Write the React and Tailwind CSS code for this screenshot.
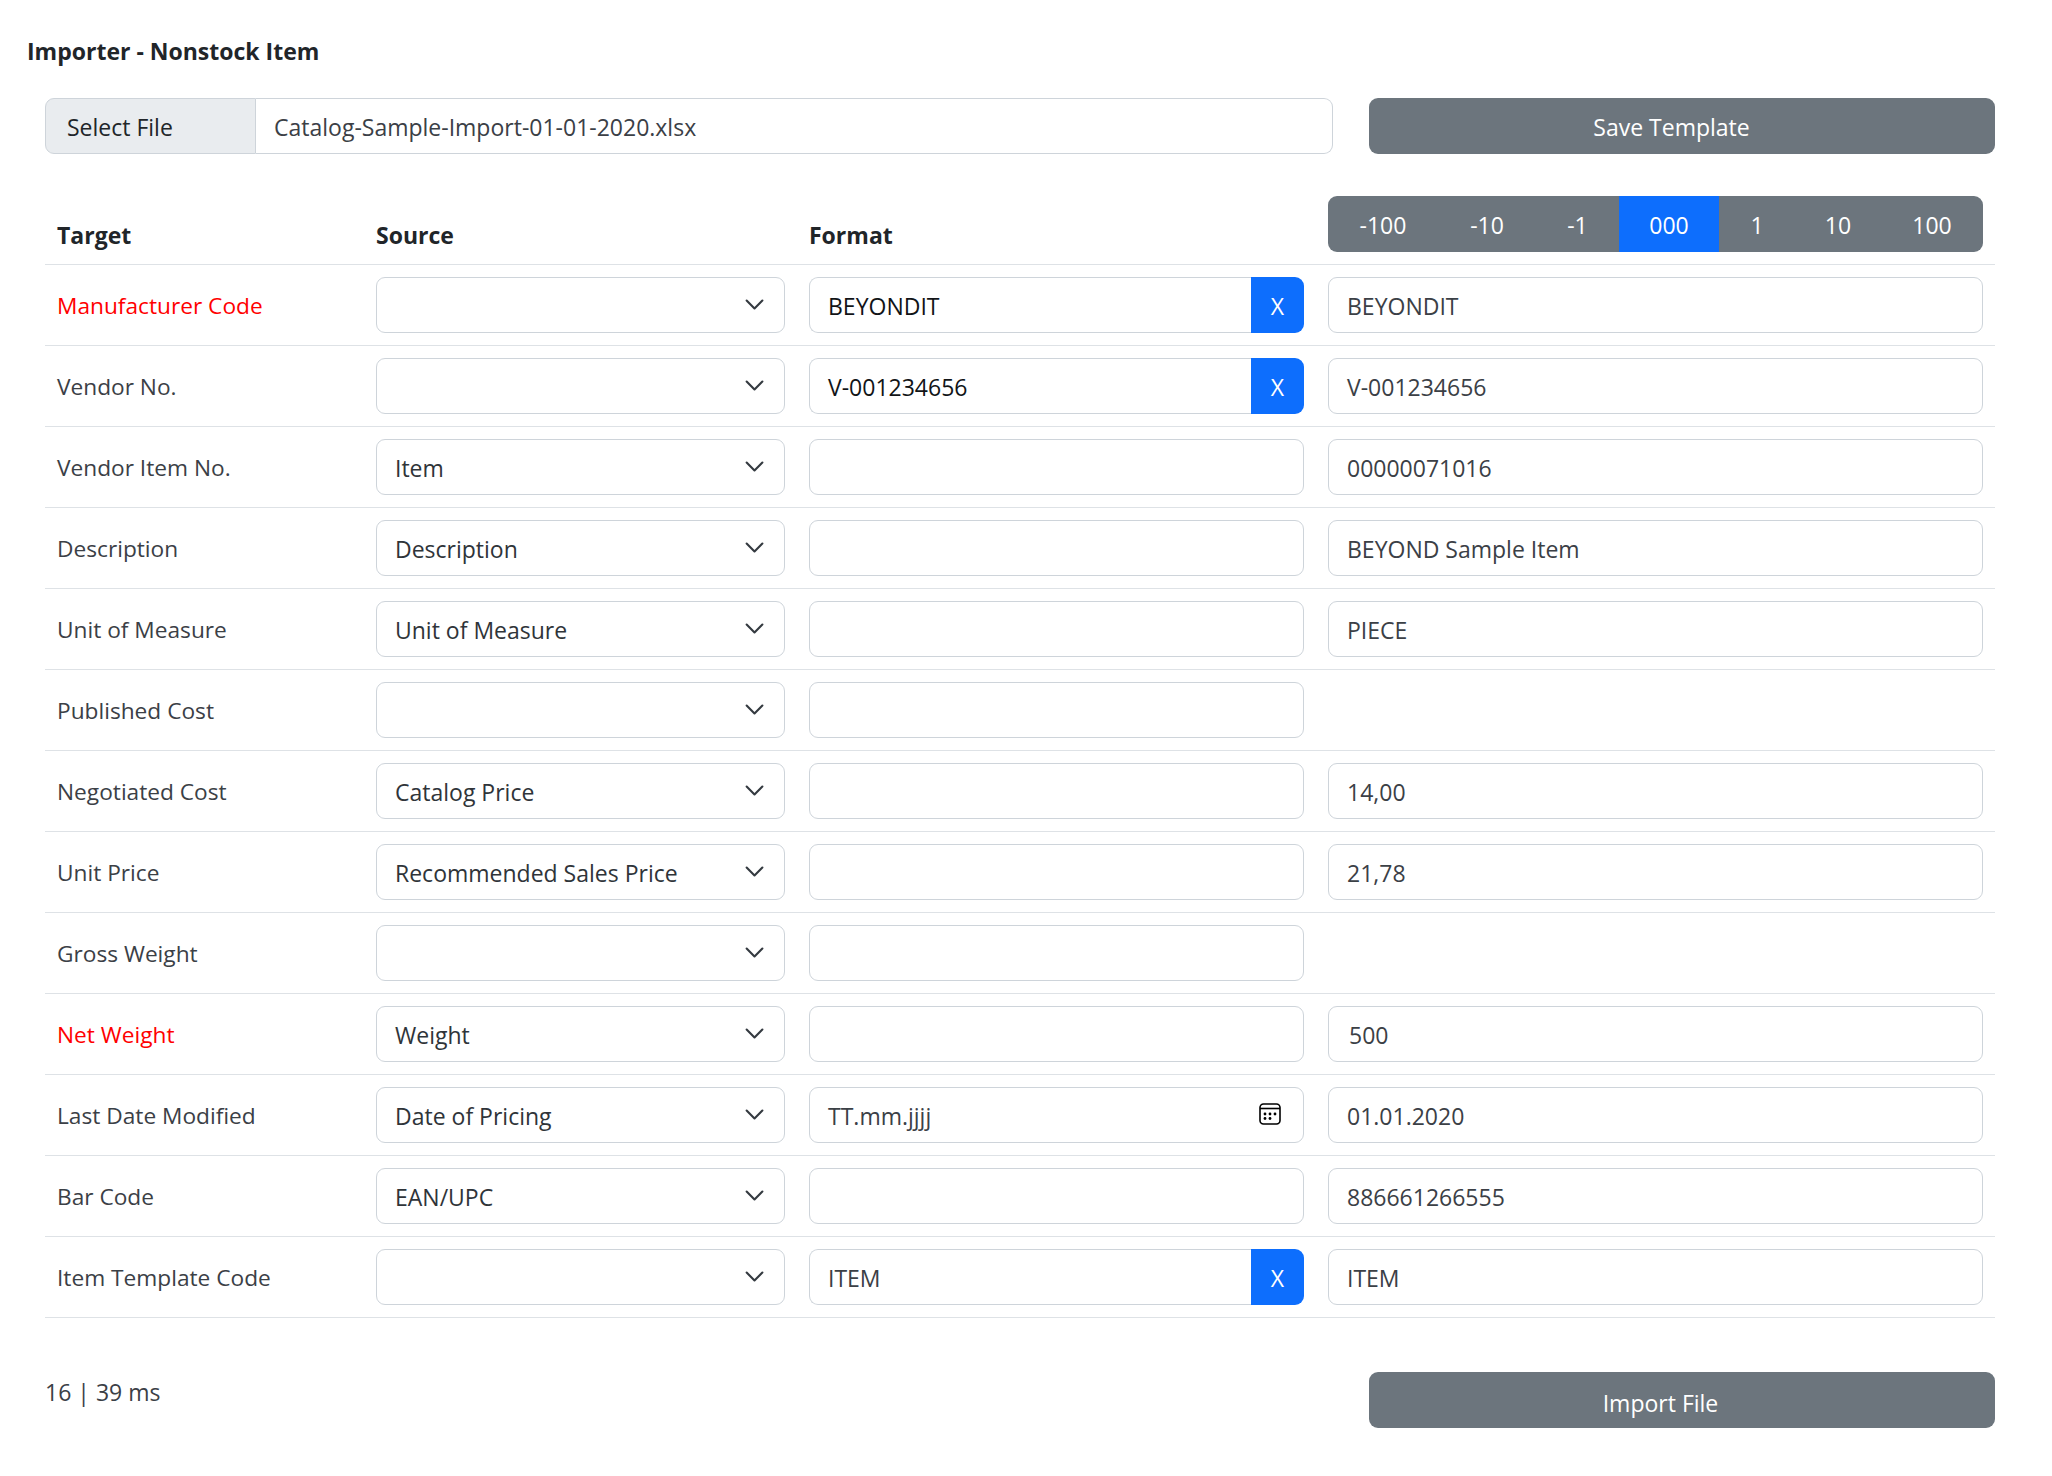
const rows = [
  { t: "Manufacturer Code", red: true, s: "", f: "BEYONDIT", x: true, dark: true, v: "BEYONDIT" },
  { t: "Vendor No.", s: "", f: "V-001234656", x: true, dark: true, v: "V-001234656" },
  { t: "Vendor Item No.", s: "Item", f: "", v: "00000071016" },
  { t: "Description", s: "Description", f: "", v: "BEYOND Sample Item" },
  { t: "Unit of Measure", s: "Unit of Measure", f: "", v: "PIECE" },
  { t: "Published Cost", s: "", f: "", v: null },
  { t: "Negotiated Cost", s: "Catalog Price", f: "", v: "14,00" },
  { t: "Unit Price", s: "Recommended Sales Price", f: "", v: "21,78" },
  { t: "Gross Weight", s: "", f: "", v: null },
  { t: "Net Weight", red: true, s: "Weight", f: "", v: "500", nudge: true },
  { t: "Last Date Modified", s: "Date of Pricing", f: "TT.mm.jjjj", date: true, v: "01.01.2020" },
  { t: "Bar Code", s: "EAN/UPC", f: "", v: "886661266555" },
  { t: "Item Template Code", s: "", f: "ITEM", x: true, v: "ITEM" },
];

const offsets = [
  ["-100", "w-[110px]"],
  ["-10", "w-[98px]"],
  ["-1", "w-[83px]"],
  ["000", "w-[100px] bg-[#0d6efd]"],
  ["1", "w-[76px]"],
  ["10", "w-[86px]"],
  ["100", "w-[102px]"],
];

const font = { fontFamily: '"Open Sans", sans-serif' };

function Chevron() {
  return (
    <svg viewBox="0 0 16 16" className="w-[21px] h-[21px] shrink-0 -mt-[2px]" fill="none" stroke="#343a40" strokeWidth="1.6" strokeLinecap="round" strokeLinejoin="round">
      <path d="m2 5 6 6 6-6" />
    </svg>
  );
}

function Calendar() {
  return (
    <svg viewBox="0 0 22 22" className="w-[22px] h-[22px] shrink-0 -mt-[2px]" fill="none" stroke="#000" strokeWidth="1.6">
      <rect x="1" y="1" width="20" height="20" rx="3.5" />
      <path d="M1 5.5h20" />
      <g fill="#000" stroke="none">
        <circle cx="6" cy="11" r="1.4" />
        <circle cx="11" cy="11" r="1.4" />
        <circle cx="16" cy="11" r="1.4" />
        <circle cx="6" cy="15.5" r="1.4" />
        <circle cx="11" cy="15.5" r="1.4" />
      </g>
    </svg>
  );
}

function Box({ className = "", children }) {
  return (
    <div className={"h-[56px] flex items-center rounded-[9px] border border-[#ced4da] bg-white text-[#3b4046] " + className}>
      {children}
    </div>
  );
}

function Row({ r }) {
  return (
    <div className="grid grid-cols-[319px_433px_519px_679px] h-[81px] border-b border-[#dee2e6] items-center">
      <div className={"pl-3 pt-[3px] text-[22.7px] " + (r.red ? "text-[#ff0000]" : "text-[#3b4046]")}>{r.t}</div>
      <div className="px-3">
        <Box className="pl-[18px] pr-[19px] justify-between">
          <span className="pt-[2px] text-[23px] text-[#2f3439]">{r.s}</span>
          <Chevron />
        </Box>
      </div>
      <div className="px-3">
        {r.x ? (
          <div className="flex h-[56px]">
            <div className={"flex-1 flex items-center pl-[18px] pt-[2px] text-[23px] rounded-l-[9px] border border-r-0 border-[#ced4da] " + (r.dark ? "text-[#111417] font-medium" : "text-[#3b4046]")}>{r.f}</div>
            <div className="w-[53px] flex items-center justify-center pt-[2px] bg-[#0d6efd] rounded-r-[9px] text-white text-[23px]">X</div>
          </div>
        ) : (
          <Box className="pl-[18px] pr-[22px] justify-between text-[23px]">
            <span className="pt-[2px]">{r.f}</span>
            {r.date && <Calendar />}
          </Box>
        )}
      </div>
      <div className="pl-3 pr-[12px]">
        {r.v !== null && (
          <Box className={"pt-[2px] text-[23px] " + (r.nudge ? "pl-5" : "pl-[18px]")}>{r.v}</Box>
        )}
      </div>
    </div>
  );
}

export default function App() {
  return (
    <div className="w-[2052px] h-[1476px] bg-white relative text-[#212529] overflow-hidden" style={font}>
      <div className="pl-[27px] pt-[35px] h-[98px] text-[23px] font-bold leading-[32px]">Importer - Nonstock Item</div>
      <div className="w-[1950px] ml-[45px]">
        <div className="flex gap-[36px] h-[56px]">
          <div className="flex w-[1288px]">
            <div className="w-[211px] flex items-center pl-[21px] pt-[2px] text-[23px] bg-[#e9ecef] border border-[#ced4da] rounded-l-[9px]">Select File</div>
            <div className="flex-1 flex items-center pl-[18px] pt-[2px] text-[23px] text-[#3b4046] border border-l-0 border-[#ced4da] rounded-r-[9px]">Catalog-Sample-Import-01-01-2020.xlsx</div>
          </div>
          <div className="flex-1 bg-[#6c757d] rounded-[9px] text-white text-[23px] flex items-center justify-center pr-[21px] pt-[3px]">Save Template</div>
        </div>
        <div className="grid grid-cols-[319px_433px_519px_679px] mt-[42px] h-[69px] border-b border-[#dee2e6] text-[23px] font-bold">
          <div className="pl-3 pt-[23px] leading-[32px]">Target</div>
          <div className="pl-3 pt-[23px] leading-[32px]">Source</div>
          <div className="pl-3 pt-[23px] leading-[32px]">Format</div>
          <div className="pl-3 pr-[12px] font-normal">
            <div className="flex h-[56px] rounded-[9px] overflow-hidden bg-[#6c757d] text-white">
              {offsets.map(([l, c]) => (
                <div key={l} className={"flex items-center justify-center pt-[2px] " + c}>{l}</div>
              ))}
            </div>
          </div>
        </div>
        {rows.map((r) => <Row key={r.t} r={r} />)}
        <div className="flex justify-between mt-[54px]">
          <div className="text-[23px] text-[#3b4046] pt-[4px] leading-[32px]">16 | 39 ms</div>
          <div className="w-[626px] h-[56px] bg-[#6c757d] rounded-[9px] text-white text-[23px] flex items-center justify-center pr-[43px] pt-[7px]">Import File</div>
        </div>
      </div>
    </div>
  );
}
